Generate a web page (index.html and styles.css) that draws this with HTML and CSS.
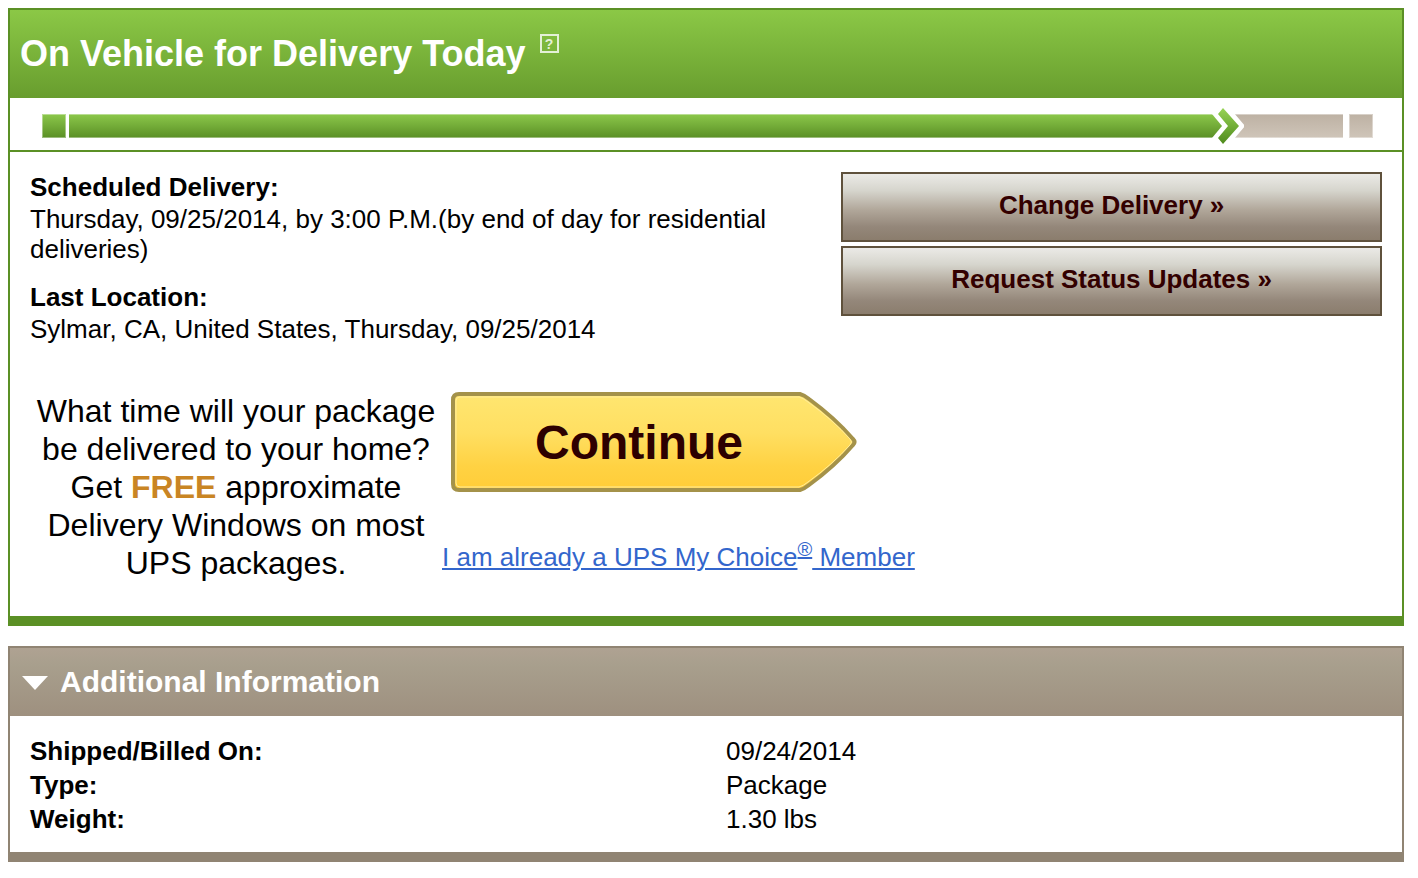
FILE: index.html
```html
<!DOCTYPE html>
<html lang="en">
<head>
<meta charset="UTF-8">
<meta name="viewport" content="width=device-width, initial-scale=1.0">
<title>Tracking Detail</title>
<link rel="stylesheet" href="styles.css">
</head>
<body>

<section class="panel status-panel">
  <div class="status-header">
    <h1>On Vehicle for Delivery Today</h1>
    <button type="button" class="help">?</button>
  </div>

  <div class="progress">
    <div class="step step-done"></div>
    <div class="bar bar-done"></div>
    <svg class="arrow" viewBox="0 0 34 36" width="34" height="36">
      <defs>
        <linearGradient id="barGreen" gradientUnits="userSpaceOnUse" x1="0" y1="6" x2="0" y2="30">
          <stop offset="0" stop-color="#8cc84b"/>
          <stop offset="1" stop-color="#5a8f25"/>
        </linearGradient>
        <linearGradient id="arrowGreen" gradientUnits="userSpaceOnUse" x1="0" y1="0" x2="0" y2="36">
          <stop offset="0" stop-color="#97d355"/>
          <stop offset="1" stop-color="#4f8a1c"/>
        </linearGradient>
        <linearGradient id="barGray" gradientUnits="userSpaceOnUse" x1="0" y1="6" x2="0" y2="30">
          <stop offset="0" stop-color="#bdb1a3"/>
          <stop offset="1" stop-color="#cfc5b9"/>
        </linearGradient>
      </defs>
      <path d="M23 6H34V30H23L33 18Z" fill="url(#barGray)"/>
      <path d="M0 6H2L12 18L2 30H0Z" fill="url(#barGreen)"/>
      <path d="M0 6H34V7H0ZM0 29H34V30H0Z" fill="#fff" fill-opacity="0.4"/>
      <path d="M13 0L29 18L13 36L8 30L18 18L8 6Z" fill="url(#arrowGreen)"/>
      <path d="M22 5L33 18L22 31" fill="none" stroke="#fff" stroke-width="3"/>
    </svg>
    <div class="bar bar-left"></div>
    <div class="step step-left"></div>
  </div>

  <div class="status-body">
    <div class="summary">
      <div class="info">
        <h2>Scheduled Delivery:</h2>
        <p>Thursday, 09/25/2014, by 3:00 P.M.(by end of day for residential deliveries)</p>
        <h2>Last Location:</h2>
        <p>Sylmar, CA, United States, Thursday, 09/25/2014</p>
      </div>
      <div class="actions">
        <button type="button" class="action-button">Change Delivery »</button>
        <button type="button" class="action-button">Request Status Updates »</button>
      </div>
    </div>

    <div class="promo">
      <p class="promo-text">What time will your package be delivered to your home? Get <strong>FREE</strong> approximate Delivery Windows on most UPS packages.</p>
      <div class="promo-links">
        <button type="button" class="continue">
          <svg class="continue-shape" viewBox="0 0 406 100" width="406" height="100">
            <defs>
              <linearGradient id="yellow" x1="0" y1="0" x2="0" y2="1">
                <stop offset="0" stop-color="#ffe670"/>
                <stop offset="0.4" stop-color="#ffdf62"/>
                <stop offset="0.75" stop-color="#ffd243"/>
                <stop offset="1" stop-color="#ffcd38"/>
              </linearGradient>
            </defs>
            <path d="M8 2H349Q353 3 358 7Q384 26 402 47Q405 50 402 53Q384 74 358 93Q353 97 349 98H8Q2 98 2 92V8Q2 2 8 2Z" fill="url(#yellow)" stroke="#a4924a" stroke-width="4"/>
            <path d="M9 5H348Q352 6 357 10Q382 28 399 47Q402 50 399 53Q382 72 357 90Q352 94 348 95H9Q5 95 5 91V9Q5 5 9 5Z" fill="none" stroke="#ffec9a" stroke-width="1"/>
          </svg>
          <span class="continue-label">Continue</span>
        </button>
        <a class="member-link" href="#">I am already a UPS My Choice<sup>®</sup> Member</a>
      </div>
    </div>
  </div>
</section>

<details class="panel info-panel" open>
  <summary>
    <svg viewBox="0 0 28 16" width="28" height="16"><path d="M1 2H27L14 16Z" fill="#fff"/></svg>
    <h2>Additional Information</h2>
  </summary>
  <table>
    <tr>
      <th scope="row">Shipped/Billed On:</th>
      <td>09/24/2014</td>
    </tr>
    <tr>
      <th scope="row">Type:</th>
      <td>Package</td>
    </tr>
    <tr>
      <th scope="row">Weight:</th>
      <td>1.30 lbs</td>
    </tr>
  </table>
</details>

</body>
</html>
```
FILE: styles.css
```css
* {
  box-sizing: border-box;
}

body {
  margin: 8px 14px 8px 8px;
  background-color: #fff;
  color: #000;
  font-family: Arial, "Liberation Sans", sans-serif;
  font-size: 26px;
  line-height: 30px;
}

h1,
h2,
p {
  margin: 0;
}

h2 {
  font-size: 26px;
}

button {
  padding: 0;
  font-family: inherit;
  font-weight: bold;
  cursor: pointer;
}

.panel {
  border: 2px solid;
  border-bottom-width: 10px;
}

.status-panel {
  margin-bottom: 20px;
  border-color: #5b9025;
}

.status-header {
  display: flex;
  align-items: flex-start;
  gap: 14px;
  padding: 24px 10px;
  background: linear-gradient(#8bc846, #689d2e);
}

.status-header h1 {
  color: #fff;
  font-size: 36px;
  line-height: 40px;
}

.help {
  width: 19px;
  height: 19px;
  border: 2px solid #e3f0d6;
  background: none;
  color: #e3f0d6;
  font-size: 14px;
  line-height: 14px;
}

/* progress bar */
.progress {
  display: flex;
  align-items: center;
  padding: 10px 29px 6px 32px;
  border-bottom: 2px solid #5b9025;
}

.step,
.bar {
  height: 24px;
}

.step {
  width: 24px;
  box-shadow: inset 0 0 0 1px rgba(255, 255, 255, 0.4);
}

.bar {
  box-shadow: inset 0 1px rgba(255, 255, 255, 0.4), inset 0 -1px rgba(255, 255, 255, 0.4);
}

.step-done,
.bar-done {
  background: linear-gradient(#8cc84b, #5a8f25);
}

.step-left,
.bar-left {
  background: linear-gradient(#bdb1a3, #cfc5b9);
}

.bar-done {
  flex: 92;
  margin-left: 3px;
}

.bar-left {
  flex: 8;
  margin-right: 6px;
}

.status-body {
  padding: 20px 20px 34px;
}

.summary {
  display: flex;
  gap: 10px;
  margin-bottom: 48px;
}

.info {
  flex: 1;
}

.info p {
  margin-top: 2px;
}

.info p + h2 {
  margin-top: 18px;
}

.actions {
  width: 40%;
  display: flex;
  flex-direction: column;
  gap: 4px;
}

.action-button {
  height: 70px;
  padding-bottom: 4px;
  border: 2px solid #5f513c;
  background: linear-gradient(#ebeae6, #d6d5cd 25%, #b0a699 55%, #94877a 80%, #8b7d6d);
  color: #330000;
  font-size: 26px;
}

/* My Choice promotion */
.promo {
  display: flex;
}

.promo-text {
  width: 412px;
  font-size: 32px;
  line-height: 38px;
  text-align: center;
}

.promo-text strong {
  color: #c98524;
}

.promo-links {
  display: flex;
  flex-direction: column;
  align-items: flex-start;
  gap: 50px;
}

.continue {
  position: relative;
  width: 406px;
  height: 100px;
  margin-left: 9px;
  border: none;
  background: none;
  color: #2d0000;
  font-size: 48px;
}

.continue-shape {
  position: absolute;
  top: 0;
  left: 0;
}

.continue-label {
  position: relative;
  padding-right: 30px;
}

.member-link {
  color: #3366cc;
}

.member-link sup {
  display: inline-block;
  font-size: 20px;
  line-height: 0;
  text-decoration: underline;
}

/* additional information */
.info-panel {
  border-color: #908473;
}

.info-panel summary {
  display: flex;
  align-items: center;
  gap: 11px;
  padding: 14px 11px;
  background: linear-gradient(#afa292, #a89f8d 25%, #9e907f);
  color: #fff;
  cursor: pointer;
}

.info-panel summary h2 {
  font-size: 30px;
  line-height: 40px;
}

.info-panel table {
  width: 100%;
  margin: 18px 0 16px;
  border-collapse: collapse;
  table-layout: fixed;
}

.info-panel th,
.info-panel td {
  padding: 2px 20px;
  text-align: left;
}
```
